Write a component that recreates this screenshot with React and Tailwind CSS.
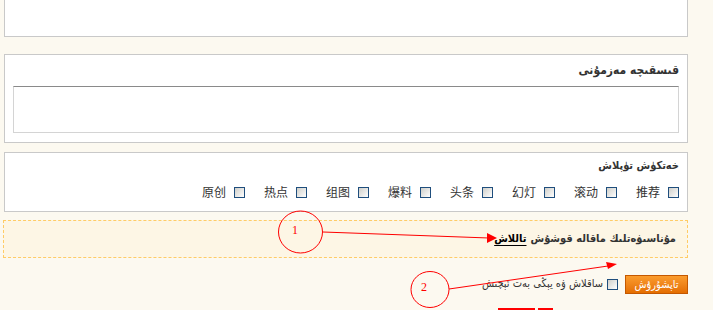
import React from "react";

const ug = { fontFamily: '"DejaVu Sans Condensed", "DejaVu Sans", sans-serif' };
const cjk = { fontFamily: '"Noto Sans CJK SC", "DejaVu Sans", sans-serif' };

const tags = ["推荐", "滚动", "幻灯", "头条", "爆料", "组图", "热点", "原创"];

function Box() {
  return (
    <span className="inline-block w-[11px] h-[11px] border border-[#1f4e7d] bg-gradient-to-br from-[#cfcfca] to-white shrink-0" />
  );
}

export default function App() {
  return (
    <div className="relative w-[713px] h-[310px] overflow-hidden bg-[#fcf9f0] text-[#333]">
      <div dir="rtl" className="ml-[4px] w-[684px]" style={ug}>
        {/* top panel (cut off) */}
        <div className="h-[37px] bg-white border border-t-0 border-[#c9c9c9]" />

        {/* summary */}
        <div className="mt-[17px] h-[89px] bg-white border border-[#c9c9c9] px-[8px] pt-[8px]">
          <div className="text-[12px] leading-[14px] font-bold text-[#333]">قىسقىچە مەزمۇنى</div>
          <div className="mt-[9px] h-[47px] border border-[#d4d4d4] border-t-[#8a8a8a] bg-white" />
        </div>

        {/* tags */}
        <div className="mt-[9px] h-[60px] bg-white border border-[#c9c9c9] px-[8px] pt-[6px]">
          <div className="text-[11px] leading-[14px] font-bold text-[#333]">خەتكۈش تۈپلاش</div>
          <div className="mt-[12px] flex items-center gap-[19px]">
            {tags.map((t) => (
              <div key={t} className="flex items-center gap-[8px]">
                <Box />
                <span className="text-[12px] leading-[14px] text-[#333]" style={cjk}>{t}</span>
              </div>
            ))}
          </div>
        </div>

        {/* related */}
        <div className="mt-[8px] h-[38px] w-[685px] bg-[#fdf6e5] border border-dashed border-[#ffcc66] pr-[11px] flex items-center">
          <span className="text-[11px] font-bold text-[#333]">مۇناسىۋەتلىك ماقالە قوشۇش</span>
          <span className="mr-[4px] text-[11px] font-bold text-black underline underline-offset-[3px]">تاللاش</span>
        </div>

        {/* submit */}
        <div className="mt-[17px] flex items-center">
          <button className="w-[63px] h-[19px] border border-[#c45800] bg-gradient-to-b from-[#fb9c2c] to-[#e46e00] text-white text-[11px] leading-[16px]">
            تاپشۇرۇش
          </button>
          <span className="mr-[7px] flex"><Box /></span>
          <span className="mr-[4px] text-[11px] text-[#333]">ساقلاش ۋە يېڭى بەت ئېچىش</span>
        </div>
      </div>

      {/* annotations */}
      <svg className="absolute inset-0 pointer-events-none" width="713" height="310" viewBox="0 0 713 310">
        <g stroke="#ff0000" strokeWidth="1" fill="none">
          <ellipse cx="300.5" cy="232" rx="22" ry="21" />
          <line x1="323" y1="232" x2="489" y2="238" />
          <ellipse cx="430" cy="289.5" rx="19" ry="18" />
          <line x1="449" y1="289" x2="608" y2="266" />
        </g>
        <polygon points="487,233 497,238 487,243" fill="#ff0000" />
        <polygon points="606,262 617,264 608,269" fill="#ff0000" />
        <rect x="498" y="308" width="37" height="2" fill="#ff0000" />
        <rect x="538" y="308" width="15" height="2" fill="#ff0000" />
        <text x="292" y="234" fill="#ff0000" fontSize="12" fontFamily="Liberation Serif, serif">1</text>
        <text x="421" y="291" fill="#ff0000" fontSize="12" fontFamily="Liberation Serif, serif">2</text>
      </svg>
    </div>
  );
}
